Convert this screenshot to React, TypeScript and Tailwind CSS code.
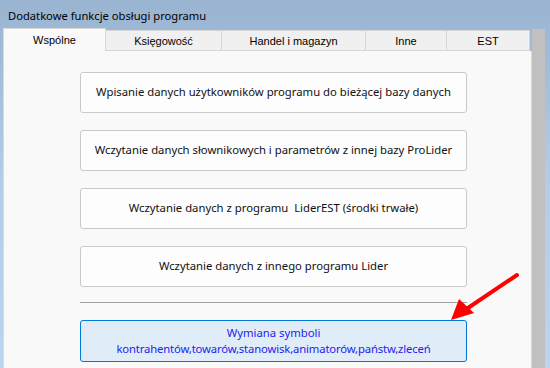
const UI = "font-['Segoe_UI','Noto_Sans',sans-serif]";

const TABS = [
  { label: 'Księgowość', w: 'w-[116px]' },
  { label: 'Handel i magazyn', w: 'w-[144px]' },
  { label: 'Inne', w: 'w-[81px]' },
  { label: 'EST', w: 'w-[83px]' },
];

const ACTIONS = [
  'Wpisanie danych użytkowników programu do bieżącej bazy danych',
  'Wczytanie danych słownikowych i parametrów z innej bazy ProLider',
  'Wczytanie danych z programu  LiderEST (środki trwałe)',
  'Wczytanie danych z innego programu Lider',
];

function ActionButton({ text }: { text: string }) {
  return (
    <button
      className={`ml-[76px] flex h-[41px] w-[387px] shrink-0 items-center justify-center whitespace-pre rounded-[3px] border border-[#c9c9c9] bg-[#fdfdfd] text-[11.3px] text-[#111] ${UI}`}
    >
      {text}
    </button>
  );
}

export default function App() {
  return (
    <div className="relative h-[368px] w-[550px] overflow-hidden bg-gradient-to-b from-[#99b4d1] via-[#b4cce7] to-[#bcd4ee]">
      {/* title */}
      <div className={`flex h-[28px] items-center pl-[8px] pt-[4px] text-[11.2px] text-black ${UI}`}>
        Dodatkowe funkcje obsługi programu
      </div>

      <div className="flex h-[340px] pl-[3px]">
        <div className="flex w-[529px] flex-col">
          {/* tabs */}
          <div className="flex h-[23px] items-end font-['Liberation_Sans',sans-serif] text-[11px] text-black">
            <div className="flex h-[23px] w-[103px] items-center justify-center border-l border-r border-t border-[#d9d9d9] bg-[#f9f9f9]">
              Wspólne
            </div>
            {TABS.map((t) => (
              <div
                key={t.label}
                className={`flex h-[21px] ${t.w} items-center justify-center border-b border-r border-t border-[#d6d6d6] bg-[#f0f0f0] pt-[1px]`}
              >
                {t.label}
              </div>
            ))}
          </div>

          {/* panel */}
          <div className="flex flex-1 flex-col border-l border-r border-[#dadada] bg-[#f9f9f9] pt-[21px]">
            <div className="flex flex-col gap-[17px]">
              {ACTIONS.map((a) => (
                <ActionButton key={a} text={a} />
              ))}
            </div>
            <div className="ml-[76px] mt-[15px] h-px w-[387px] bg-[#a0a0a0]" />
            <button
              className={`ml-[76px] mt-[17px] flex h-[42px] w-[387px] flex-col items-center justify-center rounded-[3px] border border-[#0078d7] bg-[#e0edf9] text-[11.3px] leading-[16px] text-[#2222ee] ${UI}`}
            >
              <span>Wymiana symboli</span>
              <span className="tracking-[-0.15px]">kontrahentów,towarów,stanowisk,animatorów,państw,zleceń</span>
            </button>
          </div>
        </div>
        <div className="mt-[1px] w-[13px] bg-[#c0c0c0]" />
      </div>

      {/* red arrow annotation */}
      <svg className="absolute left-0 top-0" width="550" height="368" viewBox="0 0 550 368">
        <line x1="517" y1="275" x2="462" y2="312" stroke="#ff0000" strokeWidth="4" strokeLinecap="round" />
        <polygon points="451,320 459,299 474,313" fill="#ff0000" />
      </svg>
    </div>
  );
}
